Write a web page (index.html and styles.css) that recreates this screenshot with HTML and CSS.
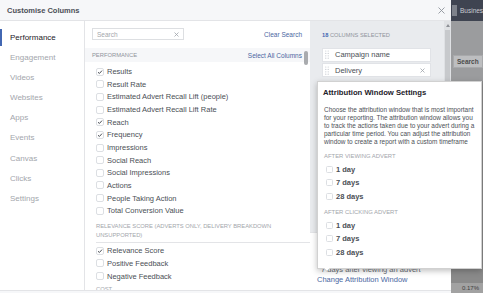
FILE: index.html
```html
<!DOCTYPE html>
<html lang="en">
<head>
<meta charset="utf-8">
<title>Customise Columns</title>
<link rel="stylesheet" href="styles.css">
</head>
<body>
<div class="screen">
  <div class="modal">
    <div class="modal-header">
      <span class="modal-title">Customise Columns</span>
      <svg class="close" width="7" height="7" viewBox="0 0 7 7"><path d="M0.5 0.5L6.5 6.5M6.5 0.5L0.5 6.5" stroke="#90949c" stroke-width="0.9"/></svg>
    </div>
    <div class="modal-body">
      <nav class="nav">
        <div class="nav-item active">Performance</div>
        <div class="nav-item">Engagement</div>
        <div class="nav-item">Videos</div>
        <div class="nav-item">Websites</div>
        <div class="nav-item">Apps</div>
        <div class="nav-item">Events</div>
        <div class="nav-item">Canvas</div>
        <div class="nav-item">Clicks</div>
        <div class="nav-item">Settings</div>
      </nav>

      <section class="picker">
        <div class="search-row">
          <div class="search-box">
            <span>Search</span>
            <svg width="5" height="5" viewBox="0 0 5 5"><path d="M0.5 0.5L4.5 4.5M4.5 0.5L0.5 4.5" stroke="#a0a4ab" stroke-width="0.8"/></svg>
          </div>
          <a class="link">Clear Search</a>
        </div>
        <div class="band">
          <span class="group-label">PERFORMANCE</span>
          <a class="link">Select All Columns</a>
        </div>
        <ul class="opts first">
          <li class="opt"><span class="cb"><svg width="6" height="6" viewBox="0 0 6 6"><path d="M1 3.2L2.4 4.5L5 1.6" fill="none" stroke="#4b4f56" stroke-width="1"/></svg></span>Results</li>
          <li class="opt"><span class="cb"></span>Result Rate</li>
          <li class="opt"><span class="cb"></span>Estimated Advert Recall Lift (people)</li>
          <li class="opt"><span class="cb"></span>Estimated Advert Recall Lift Rate</li>
          <li class="opt"><span class="cb"><svg width="6" height="6" viewBox="0 0 6 6"><path d="M1 3.2L2.4 4.5L5 1.6" fill="none" stroke="#4b4f56" stroke-width="1"/></svg></span>Reach</li>
          <li class="opt"><span class="cb"><svg width="6" height="6" viewBox="0 0 6 6"><path d="M1 3.2L2.4 4.5L5 1.6" fill="none" stroke="#4b4f56" stroke-width="1"/></svg></span>Frequency</li>
          <li class="opt"><span class="cb"></span>Impressions</li>
          <li class="opt"><span class="cb"></span>Social Reach</li>
          <li class="opt"><span class="cb"></span>Social Impressions</li>
          <li class="opt"><span class="cb"></span>Actions</li>
          <li class="opt"><span class="cb"></span>People Taking Action</li>
          <li class="opt"><span class="cb"></span>Total Conversion Value</li>
        </ul>
        <div class="group-head">RELEVANCE SCORE (ADVERTS ONLY, DELIVERY BREAKDOWN UNSUPPORTED)</div>
        <ul class="opts second">
          <li class="opt"><span class="cb"><svg width="6" height="6" viewBox="0 0 6 6"><path d="M1 3.2L2.4 4.5L5 1.6" fill="none" stroke="#4b4f56" stroke-width="1"/></svg></span>Relevance Score</li>
          <li class="opt"><span class="cb"></span>Positive Feedback</li>
          <li class="opt"><span class="cb"></span>Negative Feedback</li>
        </ul>
        <div class="group-head cost">COST</div>
        <div class="scroll-thumb"></div>
      </section>

      <aside class="selected">
        <div class="sel-top">
          <div class="sel-count"><span class="num">18</span> COLUMNS SELECTED</div>
          <div class="card">
            <svg class="handle" width="4" height="9" viewBox="0 0 4 9"><g fill="#c4c8ce"><circle cx="0.8" cy="1" r="0.6"/><circle cx="3.2" cy="1" r="0.6"/><circle cx="0.8" cy="3.4" r="0.6"/><circle cx="3.2" cy="3.4" r="0.6"/><circle cx="0.8" cy="5.8" r="0.6"/><circle cx="3.2" cy="5.8" r="0.6"/><circle cx="0.8" cy="8.2" r="0.6"/><circle cx="3.2" cy="8.2" r="0.6"/></g></svg>
            <span class="card-text">Campaign name</span>
          </div>
          <div class="card">
            <svg class="handle" width="4" height="9" viewBox="0 0 4 9"><g fill="#c4c8ce"><circle cx="0.8" cy="1" r="0.6"/><circle cx="3.2" cy="1" r="0.6"/><circle cx="0.8" cy="3.4" r="0.6"/><circle cx="3.2" cy="3.4" r="0.6"/><circle cx="0.8" cy="5.8" r="0.6"/><circle cx="3.2" cy="5.8" r="0.6"/><circle cx="0.8" cy="8.2" r="0.6"/><circle cx="3.2" cy="8.2" r="0.6"/></g></svg>
            <span class="card-text">Delivery</span>
            <svg class="card-x" width="5" height="5" viewBox="0 0 5 5"><path d="M0.5 0.5L4.5 4.5M4.5 0.5L0.5 4.5" stroke="#a0a4ab" stroke-width="0.8"/></svg>
          </div>
          <div class="vscroll"><span class="arrow"></span><span class="vthumb"></span></div>
        </div>
        <div class="attr">
          <div class="attr-desc">7 days after viewing an advert</div>
          <a class="link attr-link">Change Attribution Window</a>
        </div>
      </aside>
    </div>
    <div class="modal-footer"></div>
  </div>

  <div class="backdrop">
    <div class="topbar"><span class="tb-box"></span><span class="tb-text">Business</span></div>
    <div class="bd-mid"><span class="bd-btn">Search</span></div>
    <div class="bd-low"></div>
    <div class="bd-foot">0.17%</div>
  </div>

  <div class="popover">
    <div class="pop-title">Attribution Window Settings</div>
    <p class="pop-desc">Choose the attribution window that is most important<br>for your reporting. The attribution window allows you<br>to track the actions taken due to your advert during a<br>particular time period. You can adjust the attribution<br>window to create a report with a custom timeframe</p>
    <div class="pop-head">AFTER VIEWING ADVERT</div>
    <ul class="pop-opts">
      <li class="pop-opt"><span class="pcb"></span>1 day</li>
      <li class="pop-opt"><span class="pcb"></span>7 days</li>
      <li class="pop-opt"><span class="pcb"></span>28 days</li>
    </ul>
    <div class="pop-head">AFTER CLICKING ADVERT</div>
    <ul class="pop-opts">
      <li class="pop-opt"><span class="pcb"></span>1 day</li>
      <li class="pop-opt"><span class="pcb"></span>7 days</li>
      <li class="pop-opt"><span class="pcb"></span>28 days</li>
    </ul>
  </div>
</div>
</body>
</html>
```

FILE: styles.css
```css
* { box-sizing: border-box; margin: 0; padding: 0; }

html, body {
  width: 483px;
  height: 293px;
  overflow: hidden;
}

body {
  font-family: "Liberation Sans", Arial, sans-serif;
  color: #1d2129;
  background: #8e8e8e;
}

.screen {
  position: relative;
  display: flex;
  width: 483px;
  height: 293px;
}

/* ---------- modal ---------- */
.modal {
  flex: none;
  width: 451px;
  height: 293px;
  display: flex;
  flex-direction: column;
  background: #fff;
}

.modal-header {
  flex: none;
  height: 21px;
  background: #f6f7f9;
  border-bottom: 1px solid #e3e4e7;
  display: flex;
  align-items: center;
  justify-content: space-between;
  padding: 0 6px 0 7px;
}

.modal-title {
  font-size: 7.5px;
  font-weight: bold;
  color: #4b4f56;
}

.close { display: block; }

.modal-body {
  flex: none;
  height: 270px;
  display: flex;
  border-bottom: 1px solid #e3e4e7;
}

.modal-footer {
  flex: 1;
  background: #f6f7f9;
}

/* ---------- left nav ---------- */
.nav {
  flex: none;
  width: 85px;
  border-right: 1px solid #e3e4e7;
  padding-top: 7px;
}

.nav-item {
  position: relative;
  height: 20.1px;
  line-height: 20.1px;
  padding-left: 10px;
  font-size: 8px;
  color: #a3a6ac;
}

.nav-item.active { color: #1d2129; }

.nav-item.active::before {
  content: "";
  position: absolute;
  left: 0;
  top: 1px;
  width: 2px;
  height: 17px;
  background: #4267b2;
}

/* ---------- column picker ---------- */
.picker {
  position: relative;
  flex: none;
  width: 225px;
  overflow: hidden;
}

.search-row {
  display: flex;
  align-items: center;
  justify-content: space-between;
  padding: 7px 8px 0 7px;
}

.search-box {
  width: 92px;
  height: 12px;
  border: 1px solid #dddfe2;
  display: flex;
  align-items: center;
  justify-content: space-between;
  padding: 0 4px;
  font-size: 6.5px;
  color: #a3a6ac;
}

.search-box svg { display: block; }

.link {
  color: #4b67a1;
  font-size: 6.5px;
  text-decoration: none;
}

.band {
  margin-top: 8px;
  height: 14px;
  background: #f6f7f9;
  display: flex;
  align-items: center;
  justify-content: space-between;
  padding: 0 8px 0 7px;
}

.group-label {
  font-size: 5.8px;
  color: #90949c;
}

.opts { list-style: none; }
.opts.first { padding-top: 3.4px; }
.opts.second { padding-top: 1.7px; }

.opt {
  height: 12.65px;
  display: flex;
  align-items: center;
  padding-left: 11px;
  font-size: 7.5px;
  color: #4b4f56;
}

.cb {
  flex: none;
  width: 8px;
  height: 8px;
  margin-right: 3px;
  border: 1px solid #dcdfe3;
  border-radius: 2px;
  background: #fff;
  display: flex;
  align-items: center;
  justify-content: center;
}

.cb svg { display: block; }

.group-head {
  margin: 5.3px 0 0 11px;
  padding: 0 8px 2.8px 0;
  font-size: 5.8px;
  line-height: 8.3px;
  color: #a3a6ac;
  border-bottom: 1px solid #e3e4e7;
}

.group-head.cost {
  margin-top: 2.5px;
  border-bottom: none;
}

.scroll-thumb {
  position: absolute;
  right: 2px;
  top: 29.7px;
  width: 4px;
  height: 14px;
  border-radius: 2px;
  background: #a9abae;
}

/* ---------- selected columns ---------- */
.selected {
  flex: 1;
  display: flex;
  flex-direction: column;
}

.sel-top {
  position: relative;
  flex: 1;
  background: #e9ebee;
  padding: 10px 19px 0 12px;
}

.sel-count {
  font-size: 5.7px;
  line-height: 8px;
  color: #90949c;
  margin-bottom: 8.7px;
}

.sel-count .num {
  color: #4267b2;
  font-weight: bold;
}

.card {
  width: 109px;
  height: 14px;
  margin-bottom: 1.6px;
  background: #fff;
  border: 1px solid #e1e3e7;
  display: flex;
  align-items: center;
  padding: 0 5px 0 1.5px;
}

.handle {
  flex: none;
  display: block;
  margin-right: 6.5px;
}

.card-text {
  flex: 1;
  font-size: 7.5px;
  color: #4b4f56;
}

.card-x { display: block; flex: none; }

.vscroll {
  position: absolute;
  top: 0;
  right: 0;
  bottom: 0;
  width: 7px;
  background: #dfe1e4;
}

.vscroll .arrow {
  position: absolute;
  left: 1.5px;
  top: 3px;
  width: 0;
  height: 0;
  border-left: 2px solid transparent;
  border-right: 2px solid transparent;
  border-bottom: 3px solid #8d9096;
}

.vscroll .vthumb {
  position: absolute;
  left: 1px;
  top: 9px;
  width: 5px;
  height: 150px;
  background: #c7c9cc;
}

.attr {
  flex: none;
  height: 58px;
  background: #fff;
  border-top: 1px solid #e3e4e7;
  display: flex;
  flex-direction: column;
  justify-content: flex-end;
  padding: 0 0 5px 7px;
}

.attr-desc {
  font-size: 7.5px;
  line-height: 10px;
  color: #6b6f76;
  padding-left: 4px;
}

.attr-link {
  font-size: 7.5px;
  line-height: 10px;
}

/* ---------- page behind the modal ---------- */
.backdrop {
  flex: 1;
  display: flex;
  flex-direction: column;
  overflow: hidden;
}

.topbar {
  flex: none;
  height: 21px;
  background: #3f4451;
  display: flex;
  align-items: center;
  padding-left: 1px;
}

.tb-box {
  flex: none;
  width: 5px;
  height: 11px;
  background: #7e828b;
  margin-right: 3px;
}

.tb-text {
  font-size: 6.5px;
  color: #c9ccd1;
  white-space: nowrap;
}

.bd-mid {
  flex: none;
  height: 60px;
  background: #9b9c9e;
  padding: 34px 0 0 2px;
}

.bd-btn {
  display: block;
  height: 13px;
  line-height: 11px;
  background: #bdbec0;
  border: 1px solid #a8a9ab;
  font-size: 6.5px;
  font-weight: bold;
  color: #4b4b4b;
  padding-left: 3px;
}

.bd-low {
  flex: 1;
  background: #8a8a8a;
}

.bd-foot {
  flex: none;
  height: 10px;
  line-height: 10px;
  background: #a2a2a2;
  font-size: 6px;
  color: #3f3f3f;
  padding-left: 11px;
}

/* ---------- popover ---------- */
.popover {
  position: absolute;
  left: 317px;
  top: 81px;
  width: 165px;
  height: 187.5px;
  background: #fff;
  border: 1px solid rgba(0, 0, 0, 0.18);
  box-shadow: 0 2px 6px rgba(0, 0, 0, 0.25);
  padding: 5.7px 4px 0 5px;
}

.popover::before,
.popover::after {
  content: "";
  position: absolute;
  left: 6px;
  width: 0;
  height: 0;
  border-left: 3px solid transparent;
  border-right: 3px solid transparent;
}

.popover::before {
  bottom: -4px;
  border-top: 4px solid rgba(0, 0, 0, 0.2);
}

.popover::after {
  bottom: -3px;
  border-top: 3px solid #fff;
}

.pop-title {
  font-size: 7.7px;
  line-height: 10px;
  font-weight: bold;
  color: #1d2129;
}

.pop-desc {
  margin-top: 8px;
  padding-left: 1px;
  font-size: 6.45px;
  line-height: 8px;
  color: #4b4f56;
  white-space: nowrap;
}

.pop-head {
  margin-top: 6.3px;
  padding-left: 1px;
  font-size: 5.9px;
  line-height: 8px;
  color: #a3a6ac;
}

.pop-opts + .pop-head { margin-top: 4.5px; }

.pop-opts {
  list-style: none;
  margin-top: 2.5px;
}

.pop-opt {
  height: 13.6px;
  display: flex;
  align-items: center;
  padding-left: 3px;
  font-size: 7.5px;
  font-weight: bold;
  color: #4b4f56;
}

.pcb {
  flex: none;
  width: 7px;
  height: 7px;
  margin-right: 3px;
  border: 1px solid #dcdfe3;
  border-radius: 1.5px;
  background: #fff;
}
```
